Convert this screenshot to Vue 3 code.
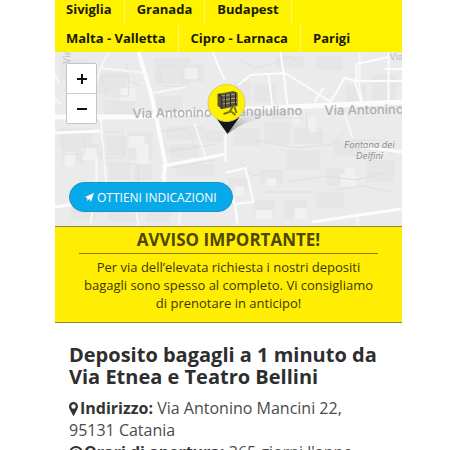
<script setup>
const cityRows = [
  ['Siviglia', 'Granada', 'Budapest'],
  ['Malta - Valletta', 'Cipro - Larnaca', 'Parigi'],
]

// Building footprints of the map: x, y, width, height
const blocks = [
  [6, 8, 28, 20], [38, 20, 34, 22], [50, 48, 30, 18], [100, 6, 36, 26], [102, 44, 26, 18],
  [128, 12, 22, 18], [176, 30, 20, 20], [200, 32, 22, 18], [222, 4, 28, 12], [262, 4, 26, 14],
  [292, 32, 20, 20], [318, 22, 24, 26], [4, 76, 34, 18], [8, 92, 22, 20], [30, 92, 14, 16],
  [52, 84, 20, 20], [74, 80, 24, 28], [54, 110, 22, 18], [80, 112, 18, 16], [112, 74, 38, 14],
  [116, 92, 28, 14], [150, 78, 18, 12], [180, 76, 26, 18], [210, 70, 26, 22], [240, 76, 28, 16],
  [174, 126, 18, 14], [206, 118, 22, 14], [232, 98, 34, 20], [272, 116, 26, 18], [312, 108, 28, 22],
  [280, 88, 26, 16], [16, 154, 26, 14], [54, 152, 30, 18], [92, 156, 24, 14], [200, 148, 20, 16],
  [230, 148, 22, 18], [262, 140, 28, 16], [122, 112, 38, 12],
]
const lightBlocks = [
  [10, 100, 11, 14], [28, 96, 14, 12], [66, 36, 15, 13], [74, 84, 16, 12], [82, 92, 12, 20],
  [130, 16, 13, 11], [254, 66, 8, 15], [238, 60, 7, 12], [286, 122, 16, 12], [212, 126, 10, 8],
  [201, 158, 17, 9], [240, 156, 12, 11], [180, 134, 10, 10], [290, 116, 10, 10],
]
const outlines = [
  'M46 24h28v20h-22z', 'M104 14h24v20h-20z', 'M186 8l14 8 18-4 14-8 16 6',
  'M8 82h22v20H8z', 'M50 80h18v26H46z', 'M104 80l30-4 6 20-26 2z',
  'M200 88l42 8 36-4 12-12', 'M182 106l16 18 22-6', 'M234 130l38-6 30 4 30-8',
  'M252 60v18l18 6', 'M280 138l28-4 30 6', 'M50 112h34v22H52z',
  'M18 142h32v18H20z', 'M110 134h34v12', 'M206 140h56', 'M296 88h34l8 16',
  'M112 100l50-8', 'M116 116l44-8', 'M72 10v18l14 6', 'M218 44v22h30',
]
</script>

<template>
  <main class="page">
    <nav class="cities" aria-label="Città">
      <ul v-for="(row, i) in cityRows" :key="i" class="city-row">
        <li v-for="city in row" :key="city"><a href="#">{{ city }}</a></li>
      </ul>
    </nav>

    <section class="map" aria-label="Mappa">
      <svg class="map-canvas" viewBox="0 0 348 174" preserveAspectRatio="xMidYMid slice" aria-hidden="true">
        <rect width="348" height="174" fill="#ebebeb" />
        <g fill="#e6e6e6">
          <rect v-for="(b, i) in blocks" :key="i" :x="b[0]" :y="b[1]" :width="b[2]" :height="b[3]" />
        </g>
        <g fill="#f1f1f1">
          <rect v-for="(b, i) in lightBlocks" :key="i" :x="b[0]" :y="b[1]" :width="b[2]" :height="b[3]" rx="2" />
        </g>
        <g fill="none" stroke="#dfdfdf">
          <path v-for="(d, i) in outlines" :key="i" :d="d" />
        </g>
        <g fill="none" stroke="#f7f7f7" stroke-width="2">
          <path d="M46 16l45 5M99 41l32-6M54 0l-8 16-4 14M0 46l6 6M46 64l6 70M140 72l12 36" />
          <path d="M5 31l-5-8M305 0v36l4 18M290 62l8 24" />
          <path d="M42 104v30l-6 38M86 134l-2 14M80 148l4 26M128 142l-4 32M179 146l4 28M303 164v10" />
        </g>
        <g fill="none" stroke="#fcfcfc">
          <path d="M0 65h78L211 56l137-6" stroke-width="5" />
          <path d="M84 0l12 40 5 22 10 50-2 15" stroke-width="4" />
          <path d="M158 0l12 28M184 33l12-10 34-2 20 12 26 17M226 0l3 20 4 34M214 22l4 33M260 50l9-14M276 50l14-24 12 3h46M300 29l8 24M302 29v-17l32-7M334 0v52M330 17h18" stroke-width="2" />
          <path d="M0 81l46-2M108 114l64-12M111 126l-3 8-22 3" stroke-width="3" />
          <path d="M171 82v28M171 121l20-5 8 34-18 2 2 20" stroke-width="2" />
          <path d="M0 155l52-8 34 4 42-6 52 4M258 170l89-13M304 94l43 6" stroke-width="3" />
        </g>
        <g class="street-label">
          <text x="78" y="66" transform="rotate(-1 78 66)">Via Antonino di Sangiuliano</text>
          <text x="270" y="63" transform="rotate(-1 270 63)">Via Antonino</text>
        </g>
        <text class="minor-label" x="335" y="8">Via</text>
        <text class="minor-label" x="15" y="12" transform="rotate(-90 15 12)">Via</text>
        <g class="place-label">
          <text x="315" y="96">Fontana dei</text>
          <text x="315" y="107">Delfini</text>
        </g>
        <defs>
          <linearGradient id="pin-shade" x1="0" y1="1" x2="1" y2="0">
            <stop offset="0" stop-color="#555" stop-opacity=".65" />
            <stop offset="1" stop-color="#999" stop-opacity="0" />
          </linearGradient>
        </defs>
        <path d="M173 82l9-14q13-7 22-1-14 2-31 15z" fill="url(#pin-shade)" />
        <path d="M161 65h24l-12 17z" fill="#171717" />
        <circle cx="172" cy="51" r="18.5" fill="#fff200" stroke="#d6cf68" />
        <g>
          <path d="M163 42l16-3 4 2v13l-15 3-5-3z" fill="#5c573c" />
          <path d="M167 44l15-2M167 48l16-2M168 52l15-2" stroke="#aaa584" fill="none" />
          <path d="M171 42v13M176 41v13M181 40v13" stroke="#27251a" fill="none" />
          <path d="M164 42l3 3v12" stroke="#3c3927" stroke-width="2" fill="none" />
          <path d="M178 55l-3 5-6 2M176 59l5 4M180 55l2 6" stroke="#7b731d" stroke-width="2" fill="none" />
        </g>
      </svg>

      <div class="zoom">
        <button type="button" aria-label="Ingrandisci">
          <svg viewBox="0 0 12 12" aria-hidden="true"><path d="M1 6h10M6 1v10" /></svg>
        </button>
        <button type="button" aria-label="Riduci">
          <svg viewBox="0 0 12 12" aria-hidden="true"><path d="M1 6h10" /></svg>
        </button>
      </div>

      <a class="directions" href="#">
        <svg viewBox="0 0 10 10" aria-hidden="true"><path d="M10 0L6.500 10L5 6.500L2.500 9V5.500L0 4.500z" /></svg>
        OTTIENI INDICAZIONI
      </a>
    </section>

    <section class="notice">
      <h2>AVVISO IMPORTANTE!</h2>
      <p>Per via dell’elevata richiesta i nostri depositi bagagli sono spesso al completo. Vi consigliamo di prenotare in anticipo!</p>
    </section>

    <section class="details">
      <h1>Deposito bagagli a 1 minuto da Via Etnea e Teatro Bellini</h1>
      <p>
        <svg class="marker" viewBox="0 0 9 14" aria-hidden="true"><path fill-rule="evenodd" d="M4.500 0A4.500 4.500 0 0 0 0 4.500C0 6 .5 6.800 1 7.800L4 13.500Q4.500 14.300 5 13.500L8 7.800C8.500 6.800 9 6 9 4.500A4.500 4.500 0 0 0 4.500 0zM4.500 2.300a2.200 2.200 0 1 1 0 4.400a2.200 2.200 0 0 1 0-4.400z" /></svg><strong>Indirizzo:</strong> Via Antonino Mancini 22, 95131 Catania
      </p>
      <p>
        <svg class="clock" viewBox="0 0 14 14" aria-hidden="true"><circle cx="7" cy="7" r="6" /><path d="M7 3.500V7.500H4.500" /></svg><strong>Orari di apertura:</strong> 365 giorni l'anno
      </p>
    </section>
  </main>
</template>

<style>
html,
body {
  background: #fff;
}

body {
  overflow: hidden;
}
</style>

<style scoped>
.page {
  box-sizing: border-box;
  height: 100vh;
  overflow: hidden;
  padding: 0 48px 0 55px;
  font-family: "Open Sans", "Noto Sans", sans-serif;
  color: #333;
}

.cities {
  background: #fff200;
  height: 52px;
  overflow: hidden;
}

.city-row {
  display: flex;
  margin: 0;
  padding: 0;
  list-style: none;
}

.city-row:first-child {
  margin-top: -5px;
}

.city-row li {
  padding: 0 12px;
  line-height: 29px;
  font-size: 13px;
  font-weight: 700;
  border-right: 1px solid #fbf37a;
}

.city-row li:first-child {
  padding-left: 11px;
}

.city-row li:last-child {
  border-right: 0;
}

.city-row:first-child li:last-child {
  border-right: 1px solid #fbf37a;
}

.city-row a {
  color: #1c1a00;
  text-decoration: none;
}

.map {
  position: relative;
  height: 174px;
  overflow: hidden;
}

.map-canvas {
  display: block;
  width: 100%;
  height: 100%;
}

.street-label {
  font-family: Inter, sans-serif;
  font-size: 13px;
  font-weight: 500;
  fill: #abafb5;
}

.minor-label {
  font-family: Inter, sans-serif;
  font-size: 9px;
  fill: #b9bcc0;
}

.place-label {
  font-family: Inter, sans-serif;
  font-size: 9px;
  font-style: italic;
  fill: #8b9296;
  text-anchor: middle;
}

.zoom {
  position: absolute;
  top: 11px;
  left: 11px;
  display: flex;
  flex-direction: column;
  border: 1px solid #c4c4c4;
  border-radius: 2px;
  background: #fff;
}

.zoom button {
  display: grid;
  place-items: center;
  width: 29px;
  height: 29px;
  padding: 0;
  border: 0;
  background: none;
}

.zoom button + button {
  height: 30px;
  border-top: 1px solid #ccc;
}

.zoom svg {
  width: 12px;
  height: 12px;
  fill: none;
  stroke: #111;
  stroke-width: 2;
}

.directions {
  position: absolute;
  left: 14px;
  bottom: 14px;
  display: flex;
  align-items: center;
  gap: 3px;
  box-sizing: border-box;
  height: 30px;
  padding: 0 15px;
  border: 1px solid #1597cb;
  border-radius: 15px;
  background: #08a9e8;
  color: #fff;
  font-size: 12px;
  font-weight: 500;
  text-decoration: none;
  white-space: nowrap;
}

.directions svg {
  width: 9px;
  height: 9px;
  fill: #fff;
}

.notice {
  padding: 0 24px 10px;
  border-top: 1px solid #8d8740;
  border-bottom: 1px solid #8d8740;
  background: #ffee03;
  color: #4d4500;
  text-align: center;
}

.notice h2 {
  margin: 0 0 4px;
  border-bottom: 1px solid #8a8000;
  font-size: 17px;
  font-weight: 700;
  line-height: 26px;
}

.notice p {
  margin: 0;
  color: #3d3600;
  font-size: 13px;
  font-weight: 500;
  line-height: 18px;
}

.details {
  padding: 21px 14px 0;
}

.details h1 {
  margin: 0 0 9px;
  font-size: 20px;
  font-weight: 700;
  line-height: 22px;
  color: #2e2e2e;
}

.details p {
  margin: 0;
  font-size: 16px;
  line-height: 22px;
  color: #4a4a4a;
}

.details strong {
  color: #333;
}

.marker {
  width: 9px;
  height: 14px;
  margin-right: 2px;
  vertical-align: -2px;
  fill: #333;
}

.clock {
  width: 14px;
  height: 14px;
  margin-right: 1px;
  vertical-align: -2px;
  fill: none;
  stroke: #333;
  stroke-width: 2;
}
</style>
